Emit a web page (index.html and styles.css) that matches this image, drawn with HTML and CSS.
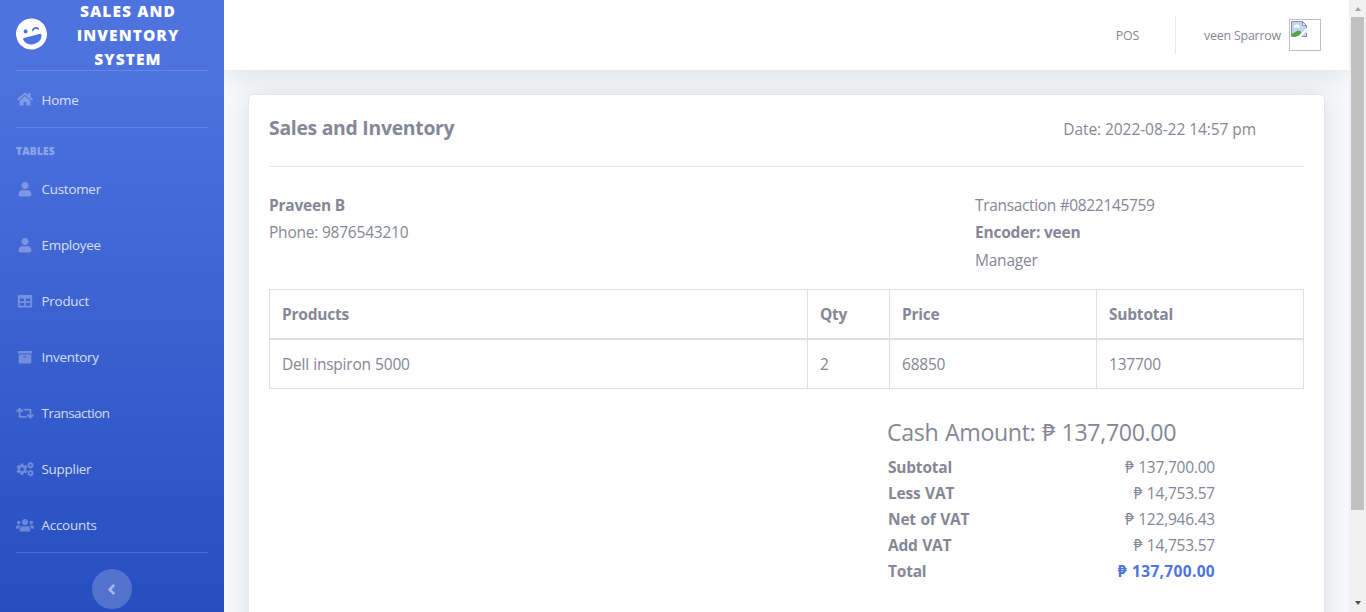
FILE: index.html
```html
<!DOCTYPE html>
<html lang="en">
<head>
<meta charset="utf-8">
<title>Sales and Inventory System</title>
<link rel="stylesheet" href="styles.css">
</head>
<body>
<div class="wrapper">
  <nav class="sidebar">
    <a class="brand">
      <svg class="brand-icon" viewBox="0 0 496 512"><path fill="#fff" d="M248 8C111 8 0 119 0 256s111 248 248 248 248-111 248-248S385 8 248 8zm20.100 198c4-25.200 34.200-42.100 59.900-42.100s55.900 16.900 59.900 42.100c1.700 11.100-11.400 18.300-19.800 10.800l-9.500-8.500c-14.800-13.200-46.200-13.200-61 0L288 216.800c-8.200 7.400-21.600.400-19.900-10.800zM168 160c17.700 0 32 14.300 32 32s-14.300 32-32 32-32-14.300-32-32 14.300-32 32-32zm230.900 146C391 369.500 335.500 418 269.400 418h-42.800C160.500 418 105 369.500 97.100 306c-1.100-9.500 6.300-18 15.900-18h270c9.600 0 17.100 8.500 15.900 18z"/></svg>
      <span class="brand-text">Sales and Inventory System</span>
    </a>
    <hr class="divider">
    <a class="nav-item home"><svg viewBox="0 0 576 512"><path d="M280.370 148.260L96 300.110V464a16 16 0 0 0 16 16l112.060-.290a16 16 0 0 0 15.920-16V368a16 16 0 0 1 16-16h64a16 16 0 0 1 16 16v95.640a16 16 0 0 0 16 16.050L464 480a16 16 0 0 0 16-16V300L295.670 148.260a12.190 12.190 0 0 0-15.300 0zM571.600 251.470L488 182.560V44.050a12 12 0 0 0-12-12h-56a12 12 0 0 0-12 12v72.610L318.470 43a48 48 0 0 0-61 0L4.340 251.470a12 12 0 0 0-1.600 16.900l25.500 31A12 12 0 0 0 45.150 301l235.220-193.740a12.190 12.190 0 0 1 15.300 0L530.900 301a12 12 0 0 0 16.900-1.600l25.500-31a12 12 0 0 0-1.700-16.930z"/></svg><span>Home</span></a>
    <hr class="divider">
    <div class="heading">Tables</div>
    <a class="nav-item"><svg viewBox="-64 0 576 512"><path d="M224 256c70.700 0 128-57.300 128-128S294.700 0 224 0 96 57.300 96 128s57.300 128 128 128zm89.600 32h-16.700c-22.200 10.200-46.900 16-72.900 16s-50.600-5.800-72.900-16h-16.700C60.200 288 0 348.200 0 422.400V464c0 26.500 21.500 48 48 48h352c26.500 0 48-21.500 48-48v-41.600c0-74.200-60.200-134.400-134.400-134.400z"/></svg><span>Customer</span></a>
    <a class="nav-item"><svg viewBox="-64 0 576 512"><path d="M224 256c70.700 0 128-57.300 128-128S294.700 0 224 0 96 57.300 96 128s57.300 128 128 128zm89.600 32h-16.700c-22.200 10.200-46.900 16-72.900 16s-50.600-5.800-72.900-16h-16.700C60.200 288 0 348.200 0 422.400V464c0 26.500 21.500 48 48 48h352c26.500 0 48-21.500 48-48v-41.600c0-74.200-60.200-134.400-134.400-134.400z"/></svg><span>Employee</span></a>
    <a class="nav-item"><svg viewBox="-32 0 576 512"><path d="M464 32H48C21.490 32 0 53.490 0 80v352c0 26.510 21.490 48 48 48h416c26.510 0 48-21.490 48-48V80c0-26.510-21.490-48-48-48zM224 416H64v-96h160v96zm0-160H64v-96h160v96zm224 160H288v-96h160v96zm0-160H288v-96h160v96z"/></svg><span>Product</span></a>
    <a class="nav-item"><svg viewBox="-32 0 576 512"><path d="M32 448c0 17.700 14.300 32 32 32h384c17.700 0 32-14.300 32-32V160H32v288zm160-212c0-6.600 5.400-12 12-12h104c6.600 0 12 5.400 12 12v8c0 6.600-5.400 12-12 12H204c-6.600 0-12-5.400-12-12v-8zM480 32H32C14.300 32 0 46.300 0 64v48c0 8.800 7.200 16 16 16h480c8.800 0 16-7.200 16-16V64c0-17.700-14.300-32-32-32z"/></svg><span>Inventory</span></a>
    <a class="nav-item"><svg viewBox="0 0 640 512"><path d="M629.657 343.598L528.971 444.284c-9.373 9.372-24.568 9.372-33.941 0L394.343 343.598c-9.373-9.373-9.373-24.569 0-33.941l10.823-10.823c9.562-9.562 25.133-9.340 34.419.492L480 342.118V160H292.451a24.005 24.005 0 0 1-16.971-7.029l-16-16C244.361 121.851 255.069 96 276.451 96H520c13.255 0 24 10.745 24 24v222.118l40.416-42.792c9.285-9.831 24.856-10.054 34.419-.492l10.823 10.823c9.372 9.372 9.372 24.569-.001 33.941zm-265.138 15.431A23.999 23.999 0 0 0 347.548 352H160V169.881l40.416 42.792c9.286 9.831 24.856 10.054 34.419.491l10.822-10.822c9.373-9.373 9.373-24.569 0-33.941L144.971 67.716c-9.373-9.373-24.569-9.373-33.941 0L10.343 168.402c-9.373 9.373-9.373 24.569 0 33.941l10.822 10.822c9.562 9.562 25.133 9.340 34.419-.491L96 169.881V392c0 13.255 10.745 24 24 24h243.549c21.382 0 32.090-25.851 16.971-40.971l-16.001-16z"/></svg><span class="tight">Transaction</span></a>
    <a class="nav-item"><svg viewBox="0 0 640 512" fill-rule="evenodd"><path d="M168 50h88l13 55a160 160 0 0 1 36 21l58-17 44 76-43 40a160 160 0 0 1 0 62l43 40-44 76-58-17a160 160 0 0 1-36 21l-13 55h-88l-13-55a160 160 0 0 1-36-21l-58 17-44-76 43-40a160 160 0 0 1 0-62l-43-40 44-76 58 17a160 160 0 0 1 36-21zM212 188a68 68 0 1 0 0 136 68 68 0 1 0 0-136z"/><path id="cog" d="M488 4h58l7 27 22 13 27-7 29 49-20 20v24l20 20-29 49-27-7-22 13-7 27h-58l-7-27-22-13-27 7-29-49 20-20v-24l-20-20 29-49 27 7 22-13zM517 84a34 34 0 1 0 0 68 34 34 0 1 0 0-68z"/><use href="#cog" y="276"/></svg><span>Supplier</span></a>
    <a class="nav-item"><svg viewBox="0 0 640 512"><path d="M96 224c35.300 0 64-28.700 64-64s-28.700-64-64-64-64 28.700-64 64 28.700 64 64 64zm448 0c35.300 0 64-28.700 64-64s-28.700-64-64-64-64 28.700-64 64 28.700 64 64 64zm32 32h-64c-17.600 0-33.500 7.100-45.100 18.600 40.300 22.100 68.900 62 75.100 109.400h66c17.700 0 32-14.300 32-32v-32c0-35.300-28.700-64-64-64zm-256 0c61.900 0 112-50.100 112-112S381.900 32 320 32 208 82.100 208 144s50.100 112 112 112zm76.800 32h-8.300c-20.800 10-43.900 16-68.500 16s-47.600-6-68.500-16h-8.300C179.600 288 128 339.600 128 403.200V432c0 26.500 21.500 48 48 48h288c26.500 0 48-21.500 48-48v-28.800c0-63.600-51.600-115.200-115.200-115.200zm-223.700-13.400C161.500 263.100 145.600 256 128 256H64c-35.300 0-64 28.700-64 64v32c0 17.700 14.300 32 32 32h65.900c6.300-47.400 34.900-87.300 75.200-109.400z"/></svg><span>Accounts</span></a>
    <hr class="divider last">
    <button class="toggle"><svg viewBox="0 0 256 512"><path d="M31.700 239l136-136c9.400-9.400 24.600-9.400 33.900 0l22.600 22.600c9.400 9.400 9.400 24.600 0 33.900L127.900 256l96.400 96.400c9.400 9.400 9.400 24.600 0 33.900L201.700 409c-9.400 9.400-24.600 9.400-33.900 0l-136-136c-9.500-9.400-9.500-24.600-.100-34z"/></svg></button>
  </nav>

  <div class="content">
    <header class="topbar">
      <a class="pos">POS</a>
      <span class="separator"></span>
      <span class="user">veen Sparrow</span>
      <span class="avatar">
        <svg viewBox="0 0 16 16"><path fill="#c3d5f5" d="M.5.500h11l4 4v11H.500z"/><path fill="#fff" d="M3 6.500V5l1.500-1L6 3l2 1v1l1 .5v1zM11 1v4h4z"/><path fill="#4ea83a" d="M1 15v-2l3-2 3-1.500 3 1 1 4.500z"/><path fill="none" stroke="#8c8f94" d="M15.500 7V4.500l-4-4H.500v15h5M11.500.500v4h4M11 15.500h4.500V12"/><path fill="#fff" d="M16 7v2.500L9.500 16H6z"/></svg>
      </span>
    </header>
    <main class="main">
      <section class="card">
        <div class="card-head">
          <h1>Sales and Inventory</h1>
          <span class="date">Date: 2022-08-22 14:57 pm</span>
        </div>
        <div class="parties">
          <div><div class="b">Praveen B</div><div>Phone: 9876543210</div></div>
          <div><div class="trans">Transaction #0822145759</div><div class="b">Encoder: veen</div><div class="manager">Manager</div></div>
        </div>
        <table class="items">
          <colgroup><col class="c1"><col class="c2"><col class="c3"><col class="c3"></colgroup>
          <thead><tr><th>Products</th><th>Qty</th><th>Price</th><th>Subtotal</th></tr></thead>
          <tbody><tr><td>Dell inspiron 5000</td><td>2</td><td>68850</td><td>137700</td></tr></tbody>
        </table>
        <div class="summary">
          <h2>Cash Amount: ₱ 137,700.00</h2>
          <div class="row"><span class="b">Subtotal</span><span>₱ 137,700.00</span></div>
          <div class="row"><span class="b">Less VAT</span><span>₱ 14,753.57</span></div>
          <div class="row"><span class="b">Net of VAT</span><span>₱ 122,946.43</span></div>
          <div class="row"><span class="b">Add VAT</span><span>₱ 14,753.57</span></div>
          <div class="row"><span class="b">Total</span><span class="b amount">₱ 137,700.00</span></div>
        </div>
      </section>
    </main>
  </div>

  <div class="scrollbar"><i class="up"></i><i class="thumb"></i><i class="down"></i></div>
</div>
</body>
</html>
```
FILE: styles.css
```css
* { box-sizing: border-box; }
body {
  margin: 0;
  height: 612px;
  overflow: hidden;
  font: 15.500px/24px "Open Sans", "Noto Sans", sans-serif;
  letter-spacing: -0.220px;
  color: #858796;
}
h1, h2, hr { margin: 0; }
.b { font-weight: 700; }
.wrapper { display: grid; grid-template-columns: 224px 1125px 17px; height: 612px; }

.sidebar {
  display: flex;
  flex-direction: column;
  height: 612px;
  background: linear-gradient(180deg, #4e73df 10%, #224abe 110%);
}
.brand { display: flex; align-items: center; height: 70px; flex: none; padding: 0 16px; color: #fff; }
.brand-icon { width: 31px; height: 32px; flex: none; transform: rotate(-15deg); margin-top: -2px; }
.brand-text {
  flex: 1;
  margin: 0 15px 0 16px;
  text-align: center;
  text-transform: uppercase;
  font-weight: 800;
  font-size: 15.500px;
  letter-spacing: 1.080px;
}
.divider { flex: none; height: 1px; border: 0; margin: 0 16px; background: rgba(255, 255, 255, 0.150); }
.nav-item {
  display: flex;
  align-items: center;
  flex: none;
  height: 56px;
  padding: 0 16px 3px;
  font-size: 13.400px;
  letter-spacing: -0.230px;
  color: rgba(255, 255, 255, 0.800);
}
.nav-item svg { width: 18px; height: 14.400px; margin-right: 7.500px; fill: rgba(255, 255, 255, 0.300); }
.nav-item span { padding-bottom: 2px; }
.nav-item .tight { letter-spacing: -0.460px; }
.nav-item.home { padding-bottom: 0; letter-spacing: -0.200px; }
.nav-item.home span { padding: 2px 0 0; }
.heading {
  height: 35px;
  padding: 15px 16px 0;
  font-size: 10.200px;
  line-height: 16px;
  font-weight: 800;
  text-transform: uppercase;
  letter-spacing: 0.200px;
  color: rgba(255, 255, 255, 0.400);
}
.divider.last { margin-top: -3px; }
.toggle {
  flex: none;
  align-self: center;
  display: flex;
  align-items: center;
  justify-content: center;
  width: 40px;
  height: 40px;
  margin-top: 16px;
  padding: 0 1.500px 0 0;
  border: 0;
  border-radius: 50%;
  background: rgba(255, 255, 255, 0.200);
}
.toggle svg { width: 9px; height: 17px; fill: rgba(255, 255, 255, 0.500); }

.content { display: flex; flex-direction: column; height: 612px; overflow: hidden; background: #f8f9fc; }
.topbar {
  display: flex;
  align-items: center;
  justify-content: flex-end;
  flex: none;
  height: 70px;
  padding-right: 28px;
  background: #fff;
  box-shadow: 0 2.400px 28px 0 rgba(58, 59, 69, 0.150);
  font-size: 12.400px;
  letter-spacing: -0.200px;
}
.pos, .user { padding-top: 1px; }
.separator { width: 1px; height: 38px; margin: 0 28px 0 36px; background: #e3e6f0; }
.avatar { width: 32px; height: 32px; margin-left: 8px; border: 1px solid silver; padding: 1px; }
.avatar svg { display: block; width: 16px; height: 16px; }
.main { padding: 24px 24px 0; }
.card {
  height: 700px;
  padding: 21px 20px;
  border: 1px solid #e3e6f0;
  border-radius: 5.600px;
  background: #fff;
  box-shadow: 0 2.400px 28px 0 rgba(58, 59, 69, 0.150);
}
.card-head {
  display: flex;
  justify-content: space-between;
  height: 51px;
  padding-right: 48px;
  border-bottom: 1px solid #e4e5ea;
}
h1 { font-size: 19.400px; line-height: 24px; font-weight: 700; letter-spacing: -0.290px; }
.date { padding-top: 1px; letter-spacing: -0.070px; }
.parties { display: grid; grid-template-columns: 706px 1fr; height: 97px; padding-top: 25px; line-height: 27px; }
.trans { letter-spacing: -0.340px; }
.manager { padding-top: 1px; }
.items { width: 1035px; margin-top: 25px; border-collapse: collapse; table-layout: fixed; }
.c1 { width: 538px; }
.c2 { width: 82px; }
.c3 { width: 207px; }
.items th, .items td { height: 49.500px; padding: 0 12px; border: 1px solid #dddfeb; text-align: left; }
.items thead th { border-bottom-width: 2px; }
.items td { word-spacing: 0.500px; }
.summary { width: 328px; margin: 26px 0 0 618px; }
h2 { font-size: 23.200px; line-height: 34px; font-weight: 400; letter-spacing: -0.360px; word-spacing: 1px; margin-bottom: 6px; white-space: nowrap; }
.row { display: flex; justify-content: space-between; height: 26px; padding-left: 1px; word-spacing: 0.800px; }
.amount { color: #4e73df; letter-spacing: 0.320px; }

.scrollbar { display: flex; flex-direction: column; align-items: center; height: 612px; background: #f1f1f1; }
.thumb { width: 13px; height: 493px; margin-top: 6px; background: #c1c1c1; }
.up, .down { width: 0; height: 0; border: 3.500px solid transparent; }
.up { margin-top: 7px; border-top: 0; border-bottom: 4px solid #a3a3a3; }
.down { margin-top: auto; margin-bottom: 7px; border-bottom: 0; border-top: 4px solid #505050; }
```
